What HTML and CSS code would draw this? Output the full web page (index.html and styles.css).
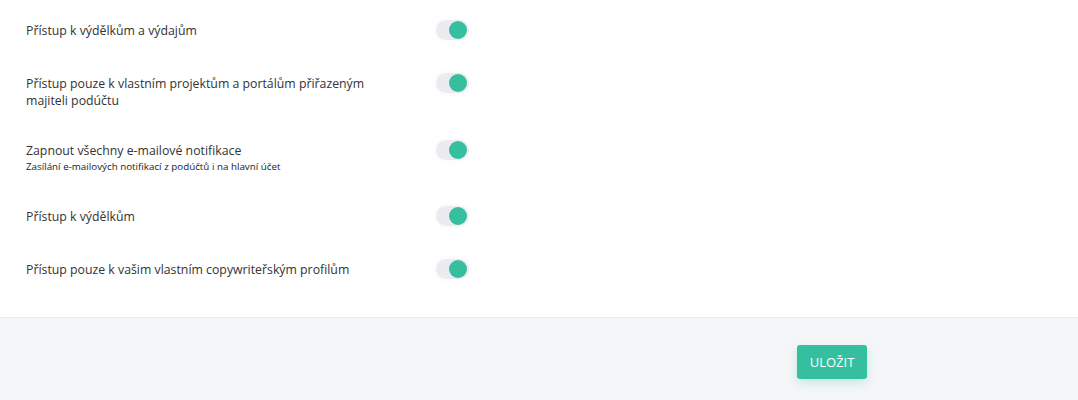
FILE: index.html
```html
<!DOCTYPE html>
<html>
<head>
    <title>Nastavení přístupu</title>
    <meta charset="utf-8">
    <link rel="stylesheet" href="styles.css">
</head>
<body>
    <div class="settings">
        <div class="setting-row">
            <div class="setting-text">Přístup k výdělkům a výdajům</div>
            <label class="switch"><input type="checkbox" checked><span class="slider"></span></label>
        </div>
        <div class="setting-row">
            <div class="setting-text">Přístup pouze k vlastním projektům a portálům přiřazeným majiteli podúčtu</div>
            <label class="switch"><input type="checkbox" checked><span class="slider"></span></label>
        </div>
        <div class="setting-row">
            <div class="setting-text">
                Zapnout všechny e-mailové notifikace
                <small>Zasílání e-mailových notifikací z podúčtů i na hlavní účet</small>
            </div>
            <label class="switch"><input type="checkbox" checked><span class="slider"></span></label>
        </div>
        <div class="setting-row">
            <div class="setting-text">Přístup k výdělkům</div>
            <label class="switch"><input type="checkbox" checked><span class="slider"></span></label>
        </div>
        <div class="setting-row">
            <div class="setting-text">Přístup pouze k vašim vlastním copywriteřským profilům</div>
            <label class="switch"><input type="checkbox" checked><span class="slider"></span></label>
        </div>
    </div>
    <div class="footer">
        <div class="footer-inner">
            <button class="btn-save">ULOŽIT</button>
        </div>
    </div>
</body>
</html>
```

FILE: styles.css
```css
body {
    font-family: "Open Sans", "Liberation Sans", sans-serif;
    background-color: #ffffff;
    color: #333;
    margin: 0;
    padding: 0;
    overflow: hidden;
}
.settings {
    display: flex;
    flex-direction: column;
    gap: 33px;
    padding: 20px 0 38px 26px;
}
.setting-row {
    display: flex;
    align-items: flex-start;
}
.setting-text {
    width: 360px;
    margin-right: 50px;
    font-size: 12.3px;
    line-height: 17px;
    padding-top: 2px;
    margin-bottom: -2px; /* keep row height = text height */
}
.setting-text small {
    display: block;
    font-size: 9.8px;
    line-height: 16px;
    color: #222;
}
.switch {
    position: relative;
    display: inline-block;
    width: 33px;
    height: 20px;
    cursor: pointer;
}
.switch input {
    display: none;
}
.slider {
    display: block;
    width: 100%;
    height: 100%;
    background: #ebebf0;
    border-radius: 10px;
    box-shadow: 0 0 6px rgba(0, 0, 0, 0.04);
}
.slider::after {
    content: "";
    position: absolute; /* knob over the track */
    top: 1px;
    left: 1px;
    width: 18px;
    height: 18px;
    border-radius: 50%;
    background: #c5c5cc;
}
.switch input:checked + .slider::after {
    left: 13px;
    background: #35bf9f;
}
.footer {
    background-color: #f5f6f8;
    border-top: 1px solid #e9ebef;
    height: 82px;
}
.footer-inner {
    width: 867px;
    display: flex;
    justify-content: flex-end;
    padding-top: 27px;
}
.btn-save {
    width: 70px;
    height: 34px;
    border: none;
    border-radius: 3px;
    background-color: #35bf9f;
    color: #fff;
    font-family: "Open Sans", "Liberation Sans", sans-serif;
    font-size: 13px;
    box-shadow: 0 4px 10px rgba(53, 191, 159, 0.25);
    cursor: pointer;
}
```
